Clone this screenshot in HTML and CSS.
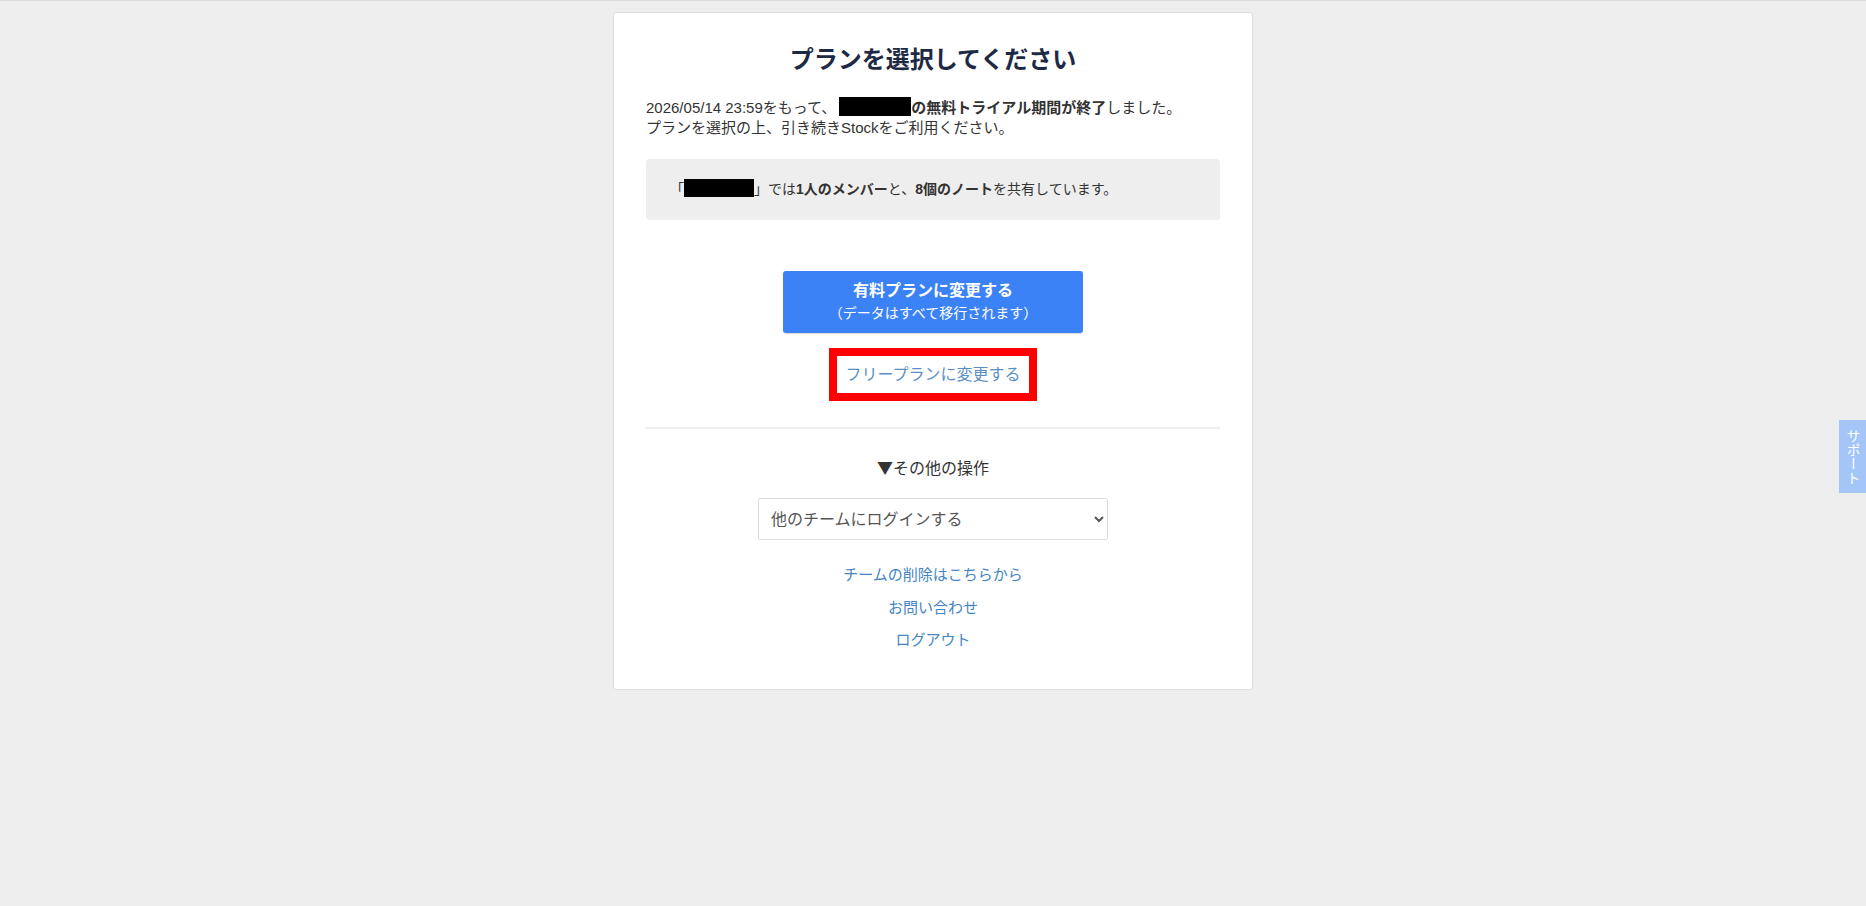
FILE: index.html
```html
<!doctype html>
<html lang="ja">
	<head>
		<meta charset="UTF-8">
		<title>プランを選択してください</title>
		<meta name="viewport" content="width=device-width, initial-scale=1.0">
		<link rel="stylesheet" href="styles.css">
	</head>

	<body>
		<div class="wrapper">
			<div class="panel">

				<h1>プランを選択してください</h1>

				<p class="notice">
					2026/05/14 23:59をもって、<span class="masked masked-wide"></span><strong>の無料トライアル期間が終了</strong>しました。<br>
					プランを選択の上、引き続きStockをご利用ください。
				</p>

				<div class="summary">
					「<span class="masked"></span>」では<strong>1人のメンバー</strong>と、<strong>8個のノート</strong>を共有しています。
				</div>

				<div class="plan-section">
					<button type="button" class="btn-paid">
						<span class="btn-main">有料プランに変更する</span>
						<span class="btn-sub">（データはすべて移行されます）</span>
					</button>

					<a href="#" class="free-link">フリープランに変更する</a>
				</div>

				<hr class="divider">

				<div class="other-section">
					<p class="other-title">▼その他の操作</p>

					<select name="team" class="team-select">
						<option>他のチームにログインする</option>
					</select>

					<ul class="links">
						<li><a href="#">チームの削除はこちらから</a></li>
						<li><a href="#">お問い合わせ</a></li>
						<li><a href="#">ログアウト</a></li>
					</ul>
				</div>

			</div>
		</div>

		<a href="#" class="support-tab">サポート</a>
	</body>
</html>
```

FILE: styles.css
```css
* {
	padding: 0;
	margin: 0;
	box-sizing: border-box;
}

body {
	background: #eeeeee;
	border-top: 1px solid #dddddd;
	color: #333333;
	font-family: "Liberation Sans", "Noto Sans CJK JP", sans-serif;
	font-size: 15px;
}

a {
	color: #4585c6;
	text-decoration: none;
}

.wrapper {
	display: flex;
	justify-content: center;
	padding-top: 11px;
}

.panel {
	width: 640px;
	background: #ffffff;
	border: 1px solid #dddddd;
	border-radius: 3px;
	padding: 30px 32px 32px;
}

h1 {
	text-align: center;
	font-size: 24px;
	line-height: 34px;
	font-weight: bold;
	color: #1e2944;
}

.notice {
	margin-top: 20px;
	line-height: 20px;
	font-size: 15px;
}

.masked {
	display: inline-block;
	width: 70px;
	height: 18px;
	background: #000000;
	vertical-align: -3px;
}

.masked-wide {
	width: 72px;
	height: 19px;
	margin-left: 3px;
}

.summary {
	margin-top: 21px;
	background: #eeeeee;
	border-radius: 4px;
	padding: 20px 24px;
	font-size: 14px;
	line-height: 21px;
}

.plan-section {
	display: flex;
	flex-direction: column;
	align-items: center;
	margin-top: 51px;
}

.btn-paid {
	display: flex;
	flex-direction: column;
	align-items: center;
	width: 300px;
	height: 62px;
	padding: 8px 0;
	border: none;
	border-radius: 3px;
	background: #3b82f6;
	box-shadow: 0 1px 1px rgba(0, 0, 0, 0.15);
	color: #ffffff;
	font-family: inherit;
	cursor: pointer;
}

.btn-main {
	font-size: 16px;
	font-weight: bold;
	line-height: 23px;
}

.btn-sub {
	font-size: 14px;
	line-height: 22px;
}

.free-link {
	display: block;
	margin-top: 15px;
	border: 8px solid #ff0000;
	padding: 7px 8px;
	font-size: 16px;
	line-height: 23px;
	color: #5a8fc4;
}

.divider {
	margin-top: 26px;
	border: none;
	border-top: 2px solid #eeeeee;
}

.other-section {
	display: flex;
	flex-direction: column;
	align-items: center;
	margin-top: 28px;
}

.other-title {
	font-family: "Noto Sans CJK JP", sans-serif;
	font-size: 16px;
	line-height: 20px;
}

.team-select {
	margin-top: 21px;
	width: 350px;
	height: 42px;
	padding: 0 8px;
	background: #ffffff;
	border: 1px solid #dddddd;
	border-radius: 2px;
	color: #555555;
	font-family: inherit;
	font-size: 16px;
}

.links {
	list-style: none;
	text-align: center;
	margin-top: 19px;
}

.links li {
	font-size: 15px;
	line-height: 32.5px;
}

.support-tab {
	position: fixed;
	right: 0;
	top: 420px;
	width: 27px;
	height: 73px;
	display: flex;
	align-items: center;
	justify-content: center;
	background: #a3c5f8;
	color: #ffffff;
	font-size: 14px;
	writing-mode: vertical-rl;
}
```
